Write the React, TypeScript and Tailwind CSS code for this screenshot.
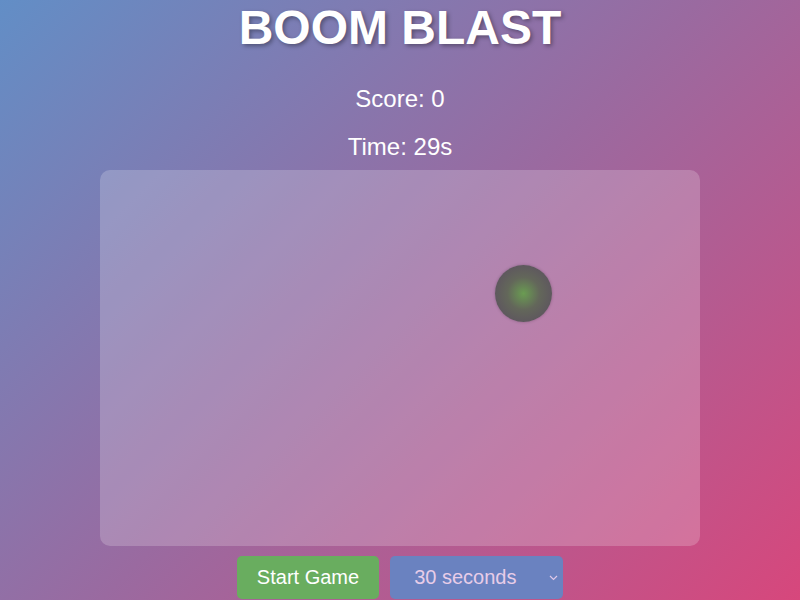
import React from "react";

export default function App() {
  return (
    <div
      className="h-screen w-full overflow-hidden bg-[linear-gradient(135deg,#628ec6_0%,#9a6aa0_50%,#d7477c_100%)] text-white flex flex-col items-center"
      style={{ fontFamily: '"Liberation Sans", Arial, sans-serif' }}
    >
      <h1 className="m-0 text-[48px] leading-[55px] font-bold [text-shadow:2px_2px_4px_rgba(0,0,0,0.35)]">
        BOOM BLAST
      </h1>
      <p className="mt-[30px] text-[24px] leading-[28px]">Score: 0</p>
      <p className="mt-[20px] text-[24px] leading-[28px]">Time: 29s</p>
      <div className="relative mt-[9px] w-[600px] h-[376px] rounded-[10px] bg-white/20">
        <div className="absolute left-[395px] top-[95px] w-[57px] h-[57px] rounded-full bg-[radial-gradient(circle,#6a9c52_0%,#63675a_40%,#5a4a62_100%)] shadow-[0_0_3px_rgba(0,0,0,0.25)]" />
      </div>
      <div className="mt-[10px] flex gap-[11px]">
        <button className="px-5 py-2.5 text-[20px] leading-[23px] rounded-[5px] bg-[#69ad5f] text-white">
          Start Game
        </button>
        <div className="relative w-[173px] rounded-[5px] bg-[#6a82c0] text-[#e8cde8] text-[20px] leading-[23px] py-2.5 pl-6">
          30 seconds
          <svg
            className="absolute right-[5px] top-[19px]"
            width="9"
            height="6"
            viewBox="0 0 9 6"
            fill="none"
            stroke="#e0c8e8"
            strokeWidth="1.2"
          >
            <path d="M1 1l3.5 3.5L8 1" />
          </svg>
        </div>
      </div>
    </div>
  );
}
